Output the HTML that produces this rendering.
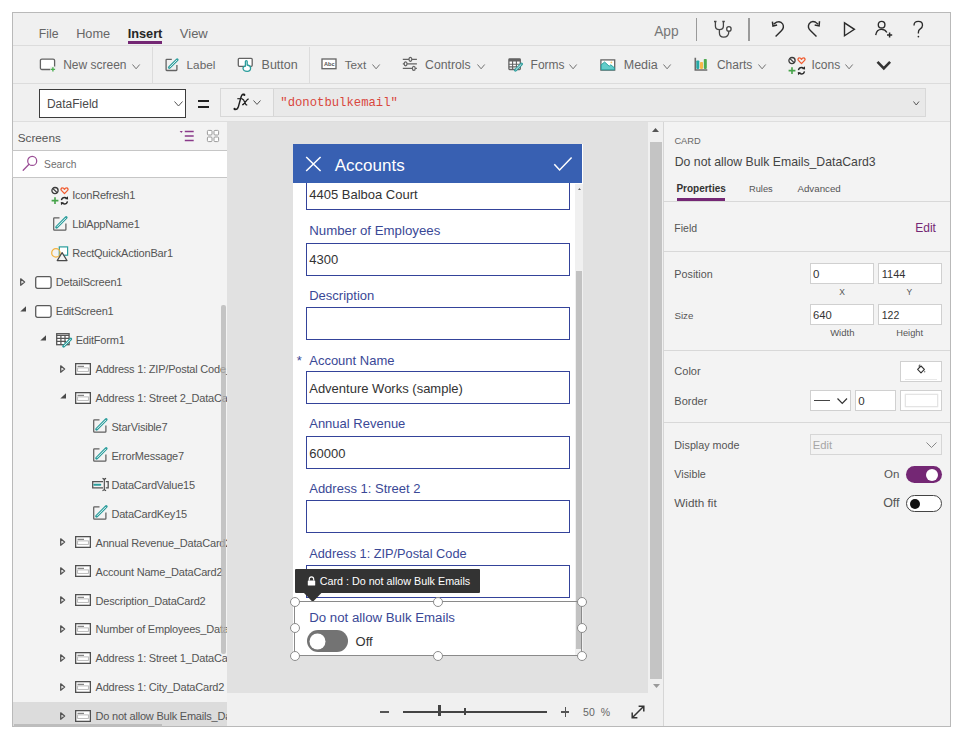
<!DOCTYPE html>
<html><head><meta charset="utf-8">
<style>
*{box-sizing:border-box;margin:0;padding:0}
html,body{-webkit-font-smoothing:antialiased;width:965px;height:739px;background:#fff;overflow:hidden;font-family:'Liberation Sans',sans-serif;color:#444}
.a{position:absolute}
.t{position:absolute;white-space:nowrap;line-height:1}
svg{position:absolute;overflow:visible}
</style></head><body>
<div class="a" style="left:12px;top:12px;width:939px;height:715px;border:1px solid #b9b9b9;background:#f0f0f0"></div>
<div class="a" style="left:13px;top:45px;width:937px;height:1px;background:#dcdcdc"></div>
<div class="a" style="left:13px;top:83px;width:937px;height:1px;background:#dcdcdc"></div>
<div class="a" style="left:13px;top:121px;width:937px;height:1px;background:#dedede"></div>
<span class="t" style="left:38.77px;top:28.00px;font-size:12.25px;color:#666666;">File</span>
<span class="t" style="left:76.14px;top:28.00px;font-size:12.75px;color:#666666;">Home</span>
<span class="t" style="left:127.64px;top:28.00px;font-size:12.75px;color:#262626;font-weight:700;">Insert</span>
<div class="a" style="left:128px;top:41px;width:34px;height:3px;background:#742774"></div>
<span class="t" style="left:179.82px;top:27.00px;font-size:13.00px;color:#666666;">View</span>
<span class="t" style="left:654.17px;top:25.00px;font-size:13.75px;color:#777777;">App</span>
<svg style="left:713px;top:20px;" width="20" height="19" viewBox="0 0 20 19"><path d="M2.4 1.5 V6 Q2.4 9.7 6.4 9.7 Q10.4 9.7 10.4 6 V1.5 M1 1.5 H3.5 M9.3 1.5 H11.8 M6.4 9.7 V12.7 Q6.4 17.1 10.6 17.1 Q15.8 17.1 15.8 11.7 V11.1" fill="none" stroke="#444" stroke-width="1.3"/><circle cx="15.9" cy="8.9" r="2.2" fill="#fff" stroke="#444" stroke-width="1.3"/></svg>
<div class="a" style="left:748.3px;top:17.5px;width:1.5px;height:23px;background:#9a9a9a"></div>
<div class="a" style="left:696px;top:17.5px;width:1.3px;height:23px;background:#9a9a9a"></div>
<svg style="left:771px;top:20px;" width="16" height="19" viewBox="0 0 16 19"><path d="M4.6 16.6 L10.4 10.8 Q13.6 7.6 11.7 4 Q9.6 0.6 5.6 2.2 L2.6 4.2" fill="none" stroke="#2b2b2b" stroke-width="1.4"/><path d="M1.4 1.6 L2 6 L6.1 5.1" fill="none" stroke="#2b2b2b" stroke-width="1.5"/></svg>
<svg style="left:805px;top:20px;" width="17" height="19" viewBox="0 0 17 19"><path d="M11.5 16.6 L5.4 10.6 Q2.2 7.4 4.1 3.8 Q6.3 0.4 10.3 2 L13.2 4.2" fill="none" stroke="#2b2b2b" stroke-width="1.4"/><path d="M14.5 1.2 L14.1 5.9 L9.7 5" fill="none" stroke="#2b2b2b" stroke-width="1.5"/></svg>
<svg style="left:843px;top:22px;" width="13" height="15" viewBox="0 0 13 15"><path d="M1.5 0.9 V13.8 L11.4 7.35 Z" fill="none" stroke="#2b2b2b" stroke-width="1.4" stroke-linejoin="miter"/></svg>
<svg style="left:874px;top:20px;" width="20" height="19" viewBox="0 0 20 19"><circle cx="7.6" cy="4.7" r="3.3" fill="none" stroke="#2b2b2b" stroke-width="1.4"/><path d="M1.7 15.2 Q2.5 9.4 7.6 9.4 Q11.2 9.4 12.9 12.5" fill="none" stroke="#2b2b2b" stroke-width="1.4"/><path d="M15.6 12.5 V17.6 M13 15.1 H18.2" stroke="#2b2b2b" stroke-width="1.5"/></svg>
<svg style="left:912px;top:20px;" width="13" height="19" viewBox="0 0 13 19"><path d="M2 5.4 Q2 1.4 6.3 1.4 Q10.5 1.4 10.5 5.2 Q10.5 7.6 8 9.1 Q6.4 10.1 6.4 12.3 V13.6" fill="none" stroke="#2b2b2b" stroke-width="1.35"/><circle cx="6.4" cy="16.6" r="0.85" fill="#2b2b2b"/></svg>
<span class="t" style="left:63.18px;top:59.00px;font-size:12.00px;color:#666666;">New screen</span>
<span class="t" style="left:186.59px;top:59.00px;font-size:11.75px;color:#666666;">Label</span>
<span class="t" style="left:261.55px;top:59.00px;font-size:12.50px;color:#666666;">Button</span>
<span class="t" style="left:344.69px;top:59.00px;font-size:11.75px;color:#666666;">Text</span>
<span class="t" style="left:425.06px;top:59.00px;font-size:12.25px;color:#666666;">Controls</span>
<span class="t" style="left:530.58px;top:59.00px;font-size:12.00px;color:#666666;">Forms</span>
<span class="t" style="left:623.75px;top:59.00px;font-size:12.50px;color:#666666;">Media</span>
<span class="t" style="left:716.88px;top:59.00px;font-size:12.00px;color:#666666;">Charts</span>
<span class="t" style="left:811.48px;top:59.00px;font-size:12.00px;color:#666666;">Icons</span>
<div class="a" style="left:152px;top:47px;width:1px;height:36px;background:#dcdcdc"></div>
<div class="a" style="left:309px;top:47px;width:1px;height:36px;background:#dcdcdc"></div>
<svg style="left:39px;top:58px;" width="18" height="14" viewBox="0 0 18 14"><rect x="1.4" y="1.1" width="14.2" height="10.4" rx="1.5" fill="#fff" stroke="#636363" stroke-width="1.3"/><rect x="11.2" y="8.5" width="5.6" height="5.5" fill="#f0f0f0"/><path d="M13.9 9.2 V13.6 M11.7 11.4 H16.1" stroke="#4caf50" stroke-width="1.4"/></svg>
<svg style="left:164.5px;top:57.5px;" width="14" height="14" viewBox="0 0 14 14"><path d="M6.8 1.3 H1.8 Q1.1 1.3 1.1 2 V11.8 Q1.1 12.5 1.8 12.5 H11.2 Q11.9 12.5 11.9 11.8 V7" fill="none" stroke="#636363" stroke-width="1.3"/><path d="M4.3 9.6 L12.2 1.7" stroke="#2a9d9c" stroke-width="2.8" stroke-linecap="round"/><path d="M4.8 9.1 L11.7 2.2" stroke="#fff" stroke-width="0.9" stroke-linecap="round"/></svg>
<svg style="left:237px;top:57px;" width="17" height="16" viewBox="0 0 17 16"><rect x="1.3" y="1.3" width="13.9" height="8.0" rx="1" fill="#fff" stroke="#636363" stroke-width="1.3"/><path d="M8.4 9.2 V4.6 Q8.4 3.7 9.3 3.7 Q10.2 3.7 10.2 4.6 V8 Q13.6 8.6 13.6 11 Q13.6 14.3 10.2 14.3 Q6.3 14.3 6.0 11.2 Q6 9.6 8.4 9.2Z" fill="#fff" stroke="#2a9d9c" stroke-width="1.3" stroke-linejoin="round"/></svg>
<svg style="left:321px;top:58px;" width="16" height="12" viewBox="0 0 16 12"><rect x="1" y="1" width="14" height="9.7" fill="#fff" stroke="#636363" stroke-width="1.3"/><text x="3" y="8.2" font-family="Liberation Sans" font-size="5.6" font-weight="700" fill="#555">Abc</text></svg>
<svg style="left:402px;top:57px;" width="16" height="14" viewBox="0 0 16 14"><path d="M0.8 2.3 H14.9 M0.8 6.8 H14.9 M0.8 11.4 H14.9" stroke="#636363" stroke-width="1.3"/><ellipse cx="8.4" cy="2.3" rx="1.4" ry="2" fill="#f0f0f0" stroke="#636363" stroke-width="1.2"/><ellipse cx="3.6" cy="6.8" rx="1.4" ry="2" fill="#f0f0f0" stroke="#636363" stroke-width="1.2"/><ellipse cx="11.8" cy="11.4" rx="1.4" ry="2" fill="#f0f0f0" stroke="#636363" stroke-width="1.2"/></svg>
<svg style="left:507.5px;top:58px;" width="16" height="14" viewBox="0 0 16 14"><rect x="0.9" y="0.9" width="11.4" height="10.6" rx="0.8" fill="#fff" stroke="#636363" stroke-width="1.3"/><rect x="0.9" y="0.9" width="11.4" height="2.6" fill="#636363"/><path d="M0.9 6.2 H12.3 M0.9 8.9 H9 M4.6 3 V11.5 M8.4 3 V9.5" stroke="#636363" stroke-width="1.1"/><path d="M7.4 12.2 L13.6 6" stroke="#2a9d9c" stroke-width="2.8" stroke-linecap="round"/><path d="M7.9 11.7 L13.1 6.5" stroke="#fff" stroke-width="0.9" stroke-linecap="round"/></svg>
<svg style="left:600px;top:58.5px;" width="16" height="12" viewBox="0 0 16 12"><rect x="0.9" y="0.9" width="13.8" height="10.2" fill="#fff" stroke="#636363" stroke-width="1.3"/><path d="M1.2 5.8 L4.6 3 L9.2 7.2 L10.8 5.8 L14.4 8.8 V10.8 H1.2Z" fill="#62cdcb" stroke="#1f9d9b" stroke-width="0.9" stroke-linejoin="round"/><circle cx="11.4" cy="3.4" r="0.9" fill="#f7c46c"/></svg>
<svg style="left:694px;top:57px;" width="15" height="15" viewBox="0 0 15 15"><rect x="2.3" y="3.5" width="3" height="8.4" rx="0.8" fill="#24a9a6"/><rect x="6" y="5" width="3" height="6.9" rx="0.8" fill="#f7b84b"/><rect x="9.8" y="2" width="3" height="9.9" rx="0.8" fill="#4caa50"/><path d="M1.3 0.8 V13 H13.3" fill="none" stroke="#6a6a6a" stroke-width="1.6"/></svg>
<svg style="left:787.5px;top:56.5px;" width="18" height="17" viewBox="0 0 18 17"><circle cx="4" cy="3.6" r="3.1" fill="none" stroke="#3a3a3a" stroke-width="1.3"/><path d="M1.9 1.6 L6.1 5.6" stroke="#3a3a3a" stroke-width="1.3"/><path d="M13.5 6.6 L10.4 3.4 C9.4 2.3 10.2 0.7 11.6 0.9 C12.6 1 13.2 1.8 13.5 2.3 C13.8 1.8 14.4 1 15.4 0.9 C16.8 0.7 17.6 2.3 16.6 3.4 Z" fill="none" stroke="#f05a2e" stroke-width="1.3" stroke-linejoin="round"/><path d="M4 10.2 V17 M0.6 13.6 H7.4" stroke="#45a349" stroke-width="1.6"/><path d="M10.4 13.2 Q11.1 10.5 13.5 10.5 Q14.9 10.5 15.7 11.6" fill="none" stroke="#2a2a2a" stroke-width="1.35"/><path d="M13.9 12.1 L17.1 12.5 L16.9 9.3Z" fill="#2a2a2a"/><path d="M16.5 14.3 Q15.8 17 13.4 17 Q12 17 11.2 15.9" fill="none" stroke="#2a2a2a" stroke-width="1.35"/><path d="M13 15.4 L9.8 15 L10 18.2Z" fill="#2a2a2a"/></svg>
<svg style="left:876px;top:59.5px;" width="16" height="11" viewBox="0 0 16 11"><path d="M1.5 1.8 L7.8 8.3 L14.1 1.8" fill="none" stroke="#333" stroke-width="2.6"/></svg>
<svg style="left:132px;top:63.5px;" width="8.2" height="4.8" viewBox="0 0 8.2 4.8"><path d="M0.5 0.5 L4.1 4.8 L7.699999999999999 0.5" fill="none" stroke="#6a6a6a" stroke-width="0.95"/></svg>
<svg style="left:372px;top:63.5px;" width="8.2" height="4.8" viewBox="0 0 8.2 4.8"><path d="M0.5 0.5 L4.1 4.8 L7.699999999999999 0.5" fill="none" stroke="#6a6a6a" stroke-width="0.95"/></svg>
<svg style="left:476.5px;top:63.5px;" width="8.2" height="4.8" viewBox="0 0 8.2 4.8"><path d="M0.5 0.5 L4.1 4.8 L7.699999999999999 0.5" fill="none" stroke="#6a6a6a" stroke-width="0.95"/></svg>
<svg style="left:569px;top:63.5px;" width="8.2" height="4.8" viewBox="0 0 8.2 4.8"><path d="M0.5 0.5 L4.1 4.8 L7.699999999999999 0.5" fill="none" stroke="#6a6a6a" stroke-width="0.95"/></svg>
<svg style="left:663px;top:63.5px;" width="8.2" height="4.8" viewBox="0 0 8.2 4.8"><path d="M0.5 0.5 L4.1 4.8 L7.699999999999999 0.5" fill="none" stroke="#6a6a6a" stroke-width="0.95"/></svg>
<svg style="left:757.5px;top:63.5px;" width="8.2" height="4.8" viewBox="0 0 8.2 4.8"><path d="M0.5 0.5 L4.1 4.8 L7.699999999999999 0.5" fill="none" stroke="#6a6a6a" stroke-width="0.95"/></svg>
<svg style="left:845px;top:63.5px;" width="8.2" height="4.8" viewBox="0 0 8.2 4.8"><path d="M0.5 0.5 L4.1 4.8 L7.699999999999999 0.5" fill="none" stroke="#6a6a6a" stroke-width="0.95"/></svg>
<div class="a" style="left:39px;top:89px;width:147px;height:29px;border:1px solid #3c3c3c;background:#fff"></div>
<span class="t" style="left:46.88px;top:98.00px;font-size:12.00px;color:#4a4a4a;">DataField</span>
<svg style="left:173.5px;top:100.5px;" width="9" height="5" viewBox="0 0 9 5"><path d="M0.5 0.5 L4.5 5 L8.5 0.5" fill="none" stroke="#555" stroke-width="1"/></svg>
<div class="a" style="left:198.3px;top:100px;width:10.4px;height:1.7px;background:#222"></div>
<div class="a" style="left:198.3px;top:106px;width:10.4px;height:1.7px;background:#222"></div>
<div class="a" style="left:220px;top:88px;width:706px;height:29px;border:1px solid #d8d8d8;background:#e9e9e9"></div>
<div class="a" style="left:221px;top:89px;width:53px;height:27px;background:#f0f0f0;border-right:1px solid #d6d6d6"></div>
<svg style="left:230px;top:92px;" width="22" height="22" viewBox="0 0 22 22"><path d="M14.6 3.2 Q14.2 2 13 2.3 Q11.5 2.7 10.6 6.6 L8.4 14.6 Q7.5 17.9 4.8 17.6" fill="none" stroke="#1e1e1e" stroke-width="1.45"/><circle cx="14.3" cy="2.9" r="1.05" fill="#1e1e1e"/><circle cx="4.6" cy="17" r="1.15" fill="#1e1e1e"/><path d="M7.3 6.7 H12.6" stroke="#1e1e1e" stroke-width="1.1"/><path d="M12.2 7.6 Q13.3 7 13.9 8.4 L15.7 12.3 Q16.1 13.1 17.2 12.6 M18.7 7.3 Q17.8 7 16.9 8.1 L13.7 12 Q13 12.9 12.1 12.6" fill="none" stroke="#1e1e1e" stroke-width="1.25"/></svg>
<svg style="left:253.3px;top:99.8px;" width="8" height="4.4" viewBox="0 0 8 4.4"><path d="M0.5 0.5 L4.0 4.4 L7.5 0.5" fill="none" stroke="#555" stroke-width="1"/></svg>
<span class="t" style="left:280.29px;top:97.00px;font-size:12.25px;color:#d9473d;font-family:'Liberation Mono',monospace;">&quot;donotbulkemail&quot;</span>
<svg style="left:912.5px;top:100.5px;" width="6.5" height="4" viewBox="0 0 6.5 4"><path d="M0.5 0.5 L3.25 4 L6.0 0.5" fill="none" stroke="#555" stroke-width="1"/></svg>
<div class="a" style="left:13px;top:122px;width:214px;height:604px;background:#f3f3f3"></div>
<span class="t" style="left:17.70px;top:132.00px;font-size:11.75px;color:#555;">Screens</span>
<svg style="left:179px;top:129px;" width="16" height="13" viewBox="0 0 16 13"><path d="M0.7 2 L3.8 2 L2.25 4Z" fill="#8a3a8a"/><path d="M5.8 2.6 H14.7 M5.8 7 H14.7 M5.8 11.4 H14.7" stroke="#8a3a8a" stroke-width="1.5"/></svg>
<svg style="left:206px;top:128.5px;" width="14" height="14" viewBox="0 0 14 14"><rect x="1.4" y="1.4" width="4.6" height="4.6" rx="1" fill="#fff" stroke="#9a9a9a" stroke-width="1"/><rect x="8" y="1.4" width="4.6" height="4.6" rx="1" fill="#fff" stroke="#9a9a9a" stroke-width="1"/><rect x="1.4" y="8" width="4.6" height="4.6" rx="1" fill="#fff" stroke="#9a9a9a" stroke-width="1"/><rect x="8" y="8" width="4.6" height="4.6" rx="1" fill="#fff" stroke="#9a9a9a" stroke-width="1"/></svg>
<div class="a" style="left:12px;top:150px;width:216px;height:28px;background:#fff;border:1px solid #c6c6c6"></div>
<span class="t" style="left:44.09px;top:160.00px;font-size:10.25px;color:#6f6f6f;">Search</span>
<svg style="left:22px;top:155px;" width="17" height="17" viewBox="0 0 17 17"><circle cx="10.2" cy="5.9" r="4.5" fill="none" stroke="#9b4f96" stroke-width="1.25"/><path d="M7 9.2 L1.2 15.2" stroke="#9b4f96" stroke-width="1.3" stroke-linecap="round"/></svg>
<div class="a" style="left:13px;top:702px;width:214px;height:24px;background:#dcdcdc"></div>
<div class="a" style="left:13px;top:180px;width:214px;height:546px;overflow:hidden">
<span class="t" style="left:59.24px;top:10.00px;font-size:11.00px;color:#555555;letter-spacing:-0.21px;">IconRefresh1</span>
<svg style="left:38px;top:7.0px;" width="18" height="17" viewBox="0 0 18 17"><circle cx="4" cy="3.6" r="3.1" fill="none" stroke="#3a3a3a" stroke-width="1.3"/><path d="M1.9 1.6 L6.1 5.6" stroke="#3a3a3a" stroke-width="1.3"/><path d="M13.5 6.6 L10.4 3.4 C9.4 2.3 10.2 0.7 11.6 0.9 C12.6 1 13.2 1.8 13.5 2.3 C13.8 1.8 14.4 1 15.4 0.9 C16.8 0.7 17.6 2.3 16.6 3.4 Z" fill="none" stroke="#f05a2e" stroke-width="1.3" stroke-linejoin="round"/><path d="M4 10.2 V17 M0.6 13.6 H7.4" stroke="#45a349" stroke-width="1.6"/><path d="M10.4 13.2 Q11.1 10.5 13.5 10.5 Q14.9 10.5 15.7 11.6" fill="none" stroke="#2a2a2a" stroke-width="1.35"/><path d="M13.9 12.1 L17.1 12.5 L16.9 9.3Z" fill="#2a2a2a"/><path d="M16.5 14.3 Q15.8 17 13.4 17 Q12 17 11.2 15.9" fill="none" stroke="#2a2a2a" stroke-width="1.35"/><path d="M13 15.4 L9.8 15 L10 18.2Z" fill="#2a2a2a"/></svg>
<span class="t" style="left:59.24px;top:39.00px;font-size:11.00px;color:#555555;letter-spacing:-0.21px;">LblAppName1</span>
<svg style="left:40px;top:36.93000000000001px;transform:scale(1.0);transform-origin:0 0" width="15" height="15" viewBox="0 0 15 15"><path d="M6.5 0.9 H1.4 Q0.7 0.9 0.7 1.6 V12.4 Q0.7 13.1 1.4 13.1 H12.2 Q12.9 13.1 12.9 12.4 V6.5" fill="none" stroke="#606060" stroke-width="1.25"/><path d="M3.6 10.2 L13.2 0.6" stroke="#2a9d9c" stroke-width="2.8" stroke-linecap="round"/><path d="M4.2 9.6 L12.6 1.2" stroke="#fff" stroke-width="0.9" stroke-linecap="round"/></svg>
<span class="t" style="left:59.24px;top:68.00px;font-size:11.00px;color:#555555;letter-spacing:-0.21px;">RectQuickActionBar1</span>
<svg style="left:38px;top:66.36000000000001px;" width="18" height="16" viewBox="0 0 18 16"><rect x="8.3" y="0.9" width="8.3" height="8.3" fill="#fff" stroke="#2a9d9c" stroke-width="1.2"/><circle cx="4.9" cy="6.9" r="4.2" fill="none" stroke="#f2b23e" stroke-width="1.2"/><path d="M11.1 6.6 L16 14.6 H6.2 Z" fill="#f3f3f3" stroke="#4a4a4a" stroke-width="1.2" stroke-linejoin="round"/></svg>
<span class="t" style="left:42.84px;top:97.00px;font-size:11.00px;color:#555555;letter-spacing:-0.21px;">DetailScreen1</span>
<svg style="left:6.899999999999999px;top:97.78999999999996px;" width="6" height="8" viewBox="0 0 6 8"><path d="M0.7 0.8 L4.6 4 L0.7 7.2 Z" fill="none" stroke="#555" stroke-width="1.3" stroke-linejoin="round"/></svg>
<svg style="left:22.4px;top:95.78999999999996px;" width="17" height="13" viewBox="0 0 17 13"><rect x="0.7" y="0.7" width="15.4" height="11.6" rx="1.8" fill="#fff" stroke="#5a5a5a" stroke-width="1.3"/></svg>
<span class="t" style="left:42.84px;top:126.00px;font-size:11.00px;color:#555555;letter-spacing:-0.21px;">EditScreen1</span>
<svg style="left:6.899999999999999px;top:126.22000000000003px;" width="7" height="6" viewBox="0 0 7 6"><path d="M0.3 5.6 L6 5.6 L6 0.2 Z" fill="#4a4a4a"/></svg>
<svg style="left:22.4px;top:124.72000000000003px;" width="17" height="13" viewBox="0 0 17 13"><rect x="0.7" y="0.7" width="15.4" height="11.6" rx="1.8" fill="#fff" stroke="#5a5a5a" stroke-width="1.3"/></svg>
<span class="t" style="left:62.74px;top:155.00px;font-size:11.00px;color:#555555;letter-spacing:-0.21px;">EditForm1</span>
<svg style="left:27.299999999999997px;top:155.14999999999998px;" width="7" height="6" viewBox="0 0 7 6"><path d="M0.3 5.6 L6 5.6 L6 0.2 Z" fill="#4a4a4a"/></svg>
<svg style="left:42.8px;top:153.14999999999998px;" width="16" height="15" viewBox="0 0 16 15"><rect x="0.7" y="0.7" width="12.4" height="11" fill="#fff" stroke="#555" stroke-width="1.3"/><path d="M0.7 2.3 H13 M0.7 5.3 H13 M0.7 8.4 H10 M4.9 2.3 V11.7 M9 2.3 V10" stroke="#555" stroke-width="1.2"/><path d="M7.6 13.3 L14.8 6.1" stroke="#2a9d9c" stroke-width="2.8" stroke-linecap="round"/><path d="M8.2 12.7 L14.2 6.7" stroke="#fff" stroke-width="0.9" stroke-linecap="round"/></svg>
<span class="t" style="left:82.54px;top:184.00px;font-size:11.00px;color:#555555;letter-spacing:-0.21px;">Address 1: ZIP/Postal Code_DataCard2</span>
<svg style="left:46.5px;top:184.57999999999998px;" width="6" height="8" viewBox="0 0 6 8"><path d="M0.7 0.8 L4.6 4 L0.7 7.2 Z" fill="none" stroke="#555" stroke-width="1.3" stroke-linejoin="round"/></svg>
<svg style="left:62px;top:182.57999999999998px;" width="16" height="12" viewBox="0 0 16 12"><rect x="0.65" y="0.65" width="14.7" height="10.7" fill="#fff" stroke="#505050" stroke-width="1.3"/><path d="M2.5 3.3 H9" stroke="#6a6a6a" stroke-width="1"/><rect x="2.6" y="4.9" width="10.8" height="3.5" fill="none" stroke="#b4b4b4" stroke-width="0.9"/></svg>
<span class="t" style="left:82.54px;top:213.00px;font-size:11.00px;color:#555555;letter-spacing:-0.21px;">Address 1: Street 2_DataCard2</span>
<svg style="left:46.5px;top:213.01px;" width="7" height="6" viewBox="0 0 7 6"><path d="M0.3 5.6 L6 5.6 L6 0.2 Z" fill="#4a4a4a"/></svg>
<svg style="left:62px;top:211.51px;" width="16" height="12" viewBox="0 0 16 12"><rect x="0.65" y="0.65" width="14.7" height="10.7" fill="#fff" stroke="#505050" stroke-width="1.3"/><path d="M2.5 3.3 H9" stroke="#6a6a6a" stroke-width="1"/><rect x="2.6" y="4.9" width="10.8" height="3.5" fill="none" stroke="#b4b4b4" stroke-width="0.9"/></svg>
<span class="t" style="left:98.44px;top:242.00px;font-size:11.00px;color:#555555;letter-spacing:-0.21px;">StarVisible7</span>
<svg style="left:80.2px;top:239.44px;transform:scale(1.0);transform-origin:0 0" width="15" height="15" viewBox="0 0 15 15"><path d="M6.5 0.9 H1.4 Q0.7 0.9 0.7 1.6 V12.4 Q0.7 13.1 1.4 13.1 H12.2 Q12.9 13.1 12.9 12.4 V6.5" fill="none" stroke="#606060" stroke-width="1.25"/><path d="M3.6 10.2 L13.2 0.6" stroke="#2a9d9c" stroke-width="2.8" stroke-linecap="round"/><path d="M4.2 9.6 L12.6 1.2" stroke="#fff" stroke-width="0.9" stroke-linecap="round"/></svg>
<span class="t" style="left:98.44px;top:271.00px;font-size:11.00px;color:#555555;letter-spacing:-0.21px;">ErrorMessage7</span>
<svg style="left:80.2px;top:268.37px;transform:scale(1.0);transform-origin:0 0" width="15" height="15" viewBox="0 0 15 15"><path d="M6.5 0.9 H1.4 Q0.7 0.9 0.7 1.6 V12.4 Q0.7 13.1 1.4 13.1 H12.2 Q12.9 13.1 12.9 12.4 V6.5" fill="none" stroke="#606060" stroke-width="1.25"/><path d="M3.6 10.2 L13.2 0.6" stroke="#2a9d9c" stroke-width="2.8" stroke-linecap="round"/><path d="M4.2 9.6 L12.6 1.2" stroke="#fff" stroke-width="0.9" stroke-linecap="round"/></svg>
<span class="t" style="left:98.44px;top:300.00px;font-size:11.00px;color:#555555;letter-spacing:-0.21px;">DataCardValue15</span>
<svg style="left:79px;top:297.8px;" width="17" height="13" viewBox="0 0 17 13"><path d="M11 3.6 H0.7 V9.8 H11 M13.8 3.6 H16.2 V9.8 H13.8" fill="none" stroke="#555" stroke-width="1.3"/><path d="M2.3 6.7 H8.3" stroke="#2a9d9c" stroke-width="2" stroke-linecap="round"/><path d="M12.3 0.6 V12.4 M10.5 0.4 Q12.3 0.8 12.3 2 Q12.3 0.8 14.1 0.4 M10.5 12.6 Q12.3 12.2 12.3 11 Q12.3 12.2 14.1 12.6" fill="none" stroke="#444" stroke-width="1.1"/></svg>
<span class="t" style="left:98.44px;top:329.00px;font-size:11.00px;color:#555555;letter-spacing:-0.21px;">DataCardKey15</span>
<svg style="left:80.2px;top:326.23px;transform:scale(1.0);transform-origin:0 0" width="15" height="15" viewBox="0 0 15 15"><path d="M6.5 0.9 H1.4 Q0.7 0.9 0.7 1.6 V12.4 Q0.7 13.1 1.4 13.1 H12.2 Q12.9 13.1 12.9 12.4 V6.5" fill="none" stroke="#606060" stroke-width="1.25"/><path d="M3.6 10.2 L13.2 0.6" stroke="#2a9d9c" stroke-width="2.8" stroke-linecap="round"/><path d="M4.2 9.6 L12.6 1.2" stroke="#fff" stroke-width="0.9" stroke-linecap="round"/></svg>
<span class="t" style="left:82.54px;top:358.00px;font-size:11.00px;color:#555555;letter-spacing:-0.21px;">Annual Revenue_DataCard2</span>
<svg style="left:46.5px;top:358.15999999999997px;" width="6" height="8" viewBox="0 0 6 8"><path d="M0.7 0.8 L4.6 4 L0.7 7.2 Z" fill="none" stroke="#555" stroke-width="1.3" stroke-linejoin="round"/></svg>
<svg style="left:62px;top:356.15999999999997px;" width="16" height="12" viewBox="0 0 16 12"><rect x="0.65" y="0.65" width="14.7" height="10.7" fill="#fff" stroke="#505050" stroke-width="1.3"/><path d="M2.5 3.3 H9" stroke="#6a6a6a" stroke-width="1"/><rect x="2.6" y="4.9" width="10.8" height="3.5" fill="none" stroke="#b4b4b4" stroke-width="0.9"/></svg>
<span class="t" style="left:82.54px;top:387.00px;font-size:11.00px;color:#555555;letter-spacing:-0.21px;">Account Name_DataCard2</span>
<svg style="left:46.5px;top:387.0899999999999px;" width="6" height="8" viewBox="0 0 6 8"><path d="M0.7 0.8 L4.6 4 L0.7 7.2 Z" fill="none" stroke="#555" stroke-width="1.3" stroke-linejoin="round"/></svg>
<svg style="left:62px;top:385.0899999999999px;" width="16" height="12" viewBox="0 0 16 12"><rect x="0.65" y="0.65" width="14.7" height="10.7" fill="#fff" stroke="#505050" stroke-width="1.3"/><path d="M2.5 3.3 H9" stroke="#6a6a6a" stroke-width="1"/><rect x="2.6" y="4.9" width="10.8" height="3.5" fill="none" stroke="#b4b4b4" stroke-width="0.9"/></svg>
<span class="t" style="left:82.54px;top:416.00px;font-size:11.00px;color:#555555;letter-spacing:-0.21px;">Description_DataCard2</span>
<svg style="left:46.5px;top:416.02px;" width="6" height="8" viewBox="0 0 6 8"><path d="M0.7 0.8 L4.6 4 L0.7 7.2 Z" fill="none" stroke="#555" stroke-width="1.3" stroke-linejoin="round"/></svg>
<svg style="left:62px;top:414.02px;" width="16" height="12" viewBox="0 0 16 12"><rect x="0.65" y="0.65" width="14.7" height="10.7" fill="#fff" stroke="#505050" stroke-width="1.3"/><path d="M2.5 3.3 H9" stroke="#6a6a6a" stroke-width="1"/><rect x="2.6" y="4.9" width="10.8" height="3.5" fill="none" stroke="#b4b4b4" stroke-width="0.9"/></svg>
<span class="t" style="left:82.54px;top:444.00px;font-size:11.00px;color:#555555;letter-spacing:-0.21px;">Number of Employees_DataCard2</span>
<svg style="left:46.5px;top:444.95000000000005px;" width="6" height="8" viewBox="0 0 6 8"><path d="M0.7 0.8 L4.6 4 L0.7 7.2 Z" fill="none" stroke="#555" stroke-width="1.3" stroke-linejoin="round"/></svg>
<svg style="left:62px;top:442.95000000000005px;" width="16" height="12" viewBox="0 0 16 12"><rect x="0.65" y="0.65" width="14.7" height="10.7" fill="#fff" stroke="#505050" stroke-width="1.3"/><path d="M2.5 3.3 H9" stroke="#6a6a6a" stroke-width="1"/><rect x="2.6" y="4.9" width="10.8" height="3.5" fill="none" stroke="#b4b4b4" stroke-width="0.9"/></svg>
<span class="t" style="left:82.54px;top:473.00px;font-size:11.00px;color:#555555;letter-spacing:-0.21px;">Address 1: Street 1_DataCard2</span>
<svg style="left:46.5px;top:473.88px;" width="6" height="8" viewBox="0 0 6 8"><path d="M0.7 0.8 L4.6 4 L0.7 7.2 Z" fill="none" stroke="#555" stroke-width="1.3" stroke-linejoin="round"/></svg>
<svg style="left:62px;top:471.88px;" width="16" height="12" viewBox="0 0 16 12"><rect x="0.65" y="0.65" width="14.7" height="10.7" fill="#fff" stroke="#505050" stroke-width="1.3"/><path d="M2.5 3.3 H9" stroke="#6a6a6a" stroke-width="1"/><rect x="2.6" y="4.9" width="10.8" height="3.5" fill="none" stroke="#b4b4b4" stroke-width="0.9"/></svg>
<span class="t" style="left:82.54px;top:502.00px;font-size:11.00px;color:#555555;letter-spacing:-0.21px;">Address 1: City_DataCard2</span>
<svg style="left:46.5px;top:502.80999999999995px;" width="6" height="8" viewBox="0 0 6 8"><path d="M0.7 0.8 L4.6 4 L0.7 7.2 Z" fill="none" stroke="#555" stroke-width="1.3" stroke-linejoin="round"/></svg>
<svg style="left:62px;top:500.80999999999995px;" width="16" height="12" viewBox="0 0 16 12"><rect x="0.65" y="0.65" width="14.7" height="10.7" fill="#fff" stroke="#505050" stroke-width="1.3"/><path d="M2.5 3.3 H9" stroke="#6a6a6a" stroke-width="1"/><rect x="2.6" y="4.9" width="10.8" height="3.5" fill="none" stroke="#b4b4b4" stroke-width="0.9"/></svg>
<span class="t" style="left:82.54px;top:531.00px;font-size:11.00px;color:#555555;letter-spacing:-0.21px;">Do not allow Bulk Emails_DataCard2</span>
<svg style="left:46.5px;top:531.74px;" width="6" height="8" viewBox="0 0 6 8"><path d="M0.7 0.8 L4.6 4 L0.7 7.2 Z" fill="none" stroke="#555" stroke-width="1.3" stroke-linejoin="round"/></svg>
<svg style="left:62px;top:529.74px;" width="16" height="12" viewBox="0 0 16 12"><rect x="0.65" y="0.65" width="14.7" height="10.7" fill="#fff" stroke="#505050" stroke-width="1.3"/><path d="M2.5 3.3 H9" stroke="#6a6a6a" stroke-width="1"/><rect x="2.6" y="4.9" width="10.8" height="3.5" fill="none" stroke="#b4b4b4" stroke-width="0.9"/></svg>
</div>
<div class="a" style="left:221px;top:305px;width:5px;height:349px;background:rgba(180,180,180,0.75);border-radius:2px"></div>
<div class="a" style="left:14px;top:724px;width:148px;height:3px;background:#bdbdbd"></div>
<div class="a" style="left:227px;top:122px;width:421px;height:571px;background:#e1e1e1"></div>
<div class="a" style="left:648px;top:122px;width:15px;height:571px;background:#f0f0f0"></div>
<div class="a" style="left:650px;top:142px;width:12px;height:537px;background:#c4c4c4"></div>
<svg style="left:652px;top:128px;" width="7" height="4" viewBox="0 0 7 4"><path d="M0 4 L3.5 0 L7 4Z" fill="#555"/></svg>
<svg style="left:652.5px;top:684px;" width="7" height="4" viewBox="0 0 7 4"><path d="M0 0 L3.5 4 L7 0Z" fill="#9a9a9a"/></svg>
<div class="a" style="left:663px;top:122px;width:1px;height:604px;background:#d6d6d6"></div>
<div class="a" style="left:227px;top:693px;width:436px;height:33px;background:#f0f0f0"></div>
<div class="a" style="left:293px;top:144px;width:290px;height:511px;background:#fff"></div>
<div class="a" style="left:293px;top:144px;width:289px;height:39px;background:#3860b2"></div>
<span class="t" style="left:334.78px;top:157.00px;font-size:17.00px;color:#fff;">Accounts</span>
<div class="a" style="left:575px;top:184px;width:8px;height:471px;background:#f0f0f0"></div>
<div class="a" style="left:575.5px;top:271px;width:6.5px;height:378px;background:#c2c2c2"></div>
<div class="a" style="left:306px;top:183.0px;width:264px;height:27.0px;border:1.3px solid #34439a;border-top:none;"></div>
<div class="a" style="left:306px;top:242.5px;width:264px;height:33.0px;border:1.3px solid #34439a;"></div>
<div class="a" style="left:306px;top:307.1px;width:264px;height:33.0px;border:1.3px solid #34439a;"></div>
<div class="a" style="left:306px;top:371.3px;width:264px;height:33.0px;border:1.3px solid #34439a;"></div>
<div class="a" style="left:306px;top:436.1px;width:264px;height:33.0px;border:1.3px solid #34439a;"></div>
<div class="a" style="left:306px;top:500.3px;width:264px;height:33.0px;border:1.3px solid #34439a;"></div>
<div class="a" style="left:306px;top:565.0px;width:264px;height:33.0px;border:1.3px solid #34439a;"></div>
<span class="t" style="left:309.22px;top:188.00px;font-size:13.00px;color:#333;">4405 Balboa Court</span>
<span class="t" style="left:309.22px;top:253.00px;font-size:13.00px;color:#333;">4300</span>
<span class="t" style="left:309.22px;top:382.00px;font-size:13.00px;color:#333;">Adventure Works (sample)</span>
<span class="t" style="left:309.22px;top:447.00px;font-size:13.00px;color:#333;">60000</span>
<span class="t" style="left:309.20px;top:224.00px;font-size:13.25px;color:#3a4896;">Number of Employees</span>
<span class="t" style="left:309.22px;top:289.00px;font-size:13.00px;color:#3a4896;">Description</span>
<span class="t" style="left:309.22px;top:354.00px;font-size:13.00px;color:#3a4896;">Account Name</span>
<span class="t" style="left:309.22px;top:417.00px;font-size:13.00px;color:#3a4896;">Annual Revenue</span>
<span class="t" style="left:309.22px;top:482.00px;font-size:13.00px;color:#3a4896;">Address 1: Street 2</span>
<span class="t" style="left:309.24px;top:548.00px;font-size:12.75px;color:#3a4896;">Address 1: ZIP/Postal Code</span>
<span class="t" style="left:309.20px;top:611.00px;font-size:13.25px;color:#3a4896;">Do not allow Bulk Emails</span>
<span class="t" style="left:296.72px;top:354.00px;font-size:13.00px;color:#3a4896;">*</span>
<div class="a" style="left:293px;top:144px;width:289px;height:39px;background:#3860b2"></div>
<span class="t" style="left:334.78px;top:157.00px;font-size:17.00px;color:#fff;">Accounts</span>
<svg style="left:305px;top:156px;" width="17" height="16" viewBox="0 0 17 16"><path d="M1.2 1 L15.6 15 M15.6 1 L1.2 15" stroke="#fff" stroke-width="1.5"/></svg>
<svg style="left:553px;top:156px;" width="20" height="16" viewBox="0 0 20 16"><path d="M1.3 8.2 L6.6 14 L18.6 1.4" fill="none" stroke="#fff" stroke-width="1.5"/></svg>
<svg style="left:577.5px;top:187.5px;" width="3" height="2" viewBox="0 0 3 2"><path d="M0 2 L1.5 0 L3 2Z" fill="#666"/></svg>
<div class="a" style="left:294.5px;top:568.5px;width:185px;height:24px;background:#333;border-radius:1px"></div>
<svg style="left:304px;top:592.5px;" width="18" height="9.5" viewBox="0 0 18 9.5"><path d="M0 0 L8.7 9 L17.4 0Z" fill="#333"/></svg>
<span class="t" style="left:319.66px;top:576.00px;font-size:10.75px;color:#fff;">Card : Do not allow Bulk Emails</span>
<svg style="left:306.5px;top:576px;" width="9" height="10" viewBox="0 0 9 10"><path d="M2.3 4.6 V3.2 Q2.3 0.9 4.5 0.9 Q6.7 0.9 6.7 3.2 V4.6" fill="none" stroke="#fff" stroke-width="1.2"/><rect x="0.8" y="4.4" width="7.4" height="5.2" rx="0.6" fill="#fff"/></svg>
<div class="a" style="left:294px;top:601px;width:288px;height:55px;border:1px solid #8a8a8a"></div>
<svg style="left:289.5px;top:596.5px;" width="10" height="10" viewBox="0 0 10 10"><circle cx="5" cy="5" r="4.5" fill="#fff" stroke="#8c8c8c" stroke-width="1"/></svg>
<svg style="left:289.5px;top:623.4px;" width="10" height="10" viewBox="0 0 10 10"><circle cx="5" cy="5" r="4.5" fill="#fff" stroke="#8c8c8c" stroke-width="1"/></svg>
<svg style="left:289.5px;top:650.5px;" width="10" height="10" viewBox="0 0 10 10"><circle cx="5" cy="5" r="4.5" fill="#fff" stroke="#8c8c8c" stroke-width="1"/></svg>
<svg style="left:432.6px;top:596.5px;" width="10" height="10" viewBox="0 0 10 10"><circle cx="5" cy="5" r="4.5" fill="#fff" stroke="#8c8c8c" stroke-width="1"/></svg>
<svg style="left:432.6px;top:650.5px;" width="10" height="10" viewBox="0 0 10 10"><circle cx="5" cy="5" r="4.5" fill="#fff" stroke="#8c8c8c" stroke-width="1"/></svg>
<svg style="left:576.5px;top:596.5px;" width="10" height="10" viewBox="0 0 10 10"><circle cx="5" cy="5" r="4.5" fill="#fff" stroke="#8c8c8c" stroke-width="1"/></svg>
<svg style="left:576.5px;top:623.4px;" width="10" height="10" viewBox="0 0 10 10"><circle cx="5" cy="5" r="4.5" fill="#fff" stroke="#8c8c8c" stroke-width="1"/></svg>
<svg style="left:576.5px;top:650.5px;" width="10" height="10" viewBox="0 0 10 10"><circle cx="5" cy="5" r="4.5" fill="#fff" stroke="#8c8c8c" stroke-width="1"/></svg>
<div class="a" style="left:306.8px;top:630.2px;width:41px;height:21.5px;background:#737373;border-radius:11px"></div>
<svg style="left:309px;top:632.5px;" width="17" height="17" viewBox="0 0 17 17"><circle cx="8.5" cy="8.5" r="8" fill="#fff"/></svg>
<span class="t" style="left:355.52px;top:635.00px;font-size:13.00px;color:#333;">Off</span>
<div class="a" style="left:380px;top:711px;width:9px;height:1.5px;background:#555"></div>
<div class="a" style="left:402.6px;top:711px;width:144.5px;height:2px;background:#444"></div>
<div class="a" style="left:437.8px;top:705px;width:3.3px;height:11px;background:#444"></div>
<div class="a" style="left:464px;top:708px;width:1.6px;height:7px;background:#444"></div>
<div class="a" style="left:560.8px;top:711.4px;width:8.7px;height:1.2px;background:#555"></div>
<div class="a" style="left:564.5px;top:707.4px;width:1.2px;height:9.4px;background:#555"></div>
<span class="t" style="left:583.07px;top:707.00px;font-size:10.50px;color:#666;">50</span>
<span class="t" style="left:600.77px;top:707.00px;font-size:10.50px;color:#666;">%</span>
<svg style="left:630px;top:704px;" width="16" height="16" viewBox="0 0 16 16"><path d="M2 14 L14 2 M8.6 2.2 H13.8 V7.4 M2.2 8.6 V13.8 H7.4" fill="none" stroke="#333" stroke-width="1.5"/></svg>
<div class="a" style="left:664px;top:122px;width:286px;height:604px;background:#f3f3f3"></div>
<span class="t" style="left:674.45px;top:137.00px;font-size:9.25px;color:#666;">CARD</span>
<span class="t" style="left:674.76px;top:156.00px;font-size:12.25px;color:#444;">Do not allow Bulk Emails_DataCard3</span>
<span class="t" style="left:676.40px;top:184.00px;font-size:10.00px;color:#333;font-weight:700;">Properties</span>
<span class="t" style="left:749.05px;top:185.00px;font-size:9.25px;color:#555;">Rules</span>
<span class="t" style="left:797.41px;top:184.00px;font-size:9.75px;color:#555;">Advanced</span>
<div class="a" style="left:677px;top:198px;width:48px;height:3px;background:#742774"></div>
<div class="a" style="left:664px;top:201px;width:286px;height:1px;background:#d8d8d8"></div>
<span class="t" style="left:674.37px;top:223.00px;font-size:10.50px;color:#555;">Field</span>
<span class="t" style="left:915.28px;top:222.00px;font-size:12.00px;color:#742774;">Edit</span>
<div class="a" style="left:664px;top:251px;width:286px;height:1px;background:#d8d8d8"></div>
<span class="t" style="left:674.36px;top:269.00px;font-size:10.75px;color:#555;">Position</span>
<div class="a" style="left:810px;top:262.5px;width:64px;height:21px;background:#fff;border:1px solid #d0d0d0"></div>
<div class="a" style="left:877.8px;top:262.5px;width:64.7px;height:21px;background:#fff;border:1px solid #d0d0d0"></div>
<span class="t" style="left:813.11px;top:269.00px;font-size:11.50px;color:#333;">0</span>
<span class="t" style="left:881.74px;top:269.00px;font-size:11.00px;color:#333;">1144</span>
<span class="t" style="left:839.19px;top:288.00px;font-size:8.50px;color:#555;">X</span>
<span class="t" style="left:906.49px;top:288.00px;font-size:8.50px;color:#555;">Y</span>
<span class="t" style="left:674.41px;top:311.00px;font-size:9.75px;color:#555;">Size</span>
<div class="a" style="left:810px;top:303.7px;width:64px;height:21.3px;background:#fff;border:1px solid #d0d0d0"></div>
<div class="a" style="left:877.8px;top:303.7px;width:64.7px;height:21.3px;background:#fff;border:1px solid #d0d0d0"></div>
<span class="t" style="left:813.12px;top:310.00px;font-size:11.25px;color:#333;">640</span>
<span class="t" style="left:881.77px;top:310.00px;font-size:10.50px;color:#333;">122</span>
<span class="t" style="left:830.13px;top:328.00px;font-size:9.50px;color:#555;">Width</span>
<span class="t" style="left:896.25px;top:329.00px;font-size:9.25px;color:#555;">Height</span>
<div class="a" style="left:664px;top:349.5px;width:286px;height:1px;background:#d8d8d8"></div>
<span class="t" style="left:674.34px;top:366.00px;font-size:11.00px;color:#555;">Color</span>
<div class="a" style="left:900.4px;top:361px;width:41.4px;height:20.5px;background:#fff;border:1px solid #d0d0d0"></div>
<svg style="left:915px;top:364px;" width="12" height="12" viewBox="0 0 12 12"><path d="M2.6 5.4 L6 2 L9.4 5.4 L6 8.8 Z" fill="#fff" stroke="#333" stroke-width="1.1" stroke-linejoin="round"/><path d="M4.4 3.6 Q3.4 0.6 5.2 0.8" fill="none" stroke="#333" stroke-width="0.9"/><path d="M9.8 6.6 Q10.8 8.2 9.8 8.8 Q8.8 8.2 9.8 6.6Z" fill="#333"/></svg>
<div class="a" style="left:905px;top:378.5px;width:32px;height:1px;background:#e8e8e8"></div>
<span class="t" style="left:674.34px;top:396.00px;font-size:11.00px;color:#555;">Border</span>
<div class="a" style="left:810px;top:389.7px;width:41.4px;height:21.3px;background:#fff;border:1px solid #d0d0d0"></div>
<div class="a" style="left:813.8px;top:400px;width:16px;height:1px;background:#444"></div>
<svg style="left:836.7px;top:397.5px;" width="10.5" height="5.5" viewBox="0 0 10.5 5.5"><path d="M0.5 0.5 L5.25 5.5 L10.0 0.5" fill="none" stroke="#333" stroke-width="1.2"/></svg>
<div class="a" style="left:855.3px;top:389.7px;width:41.2px;height:21.3px;background:#fff;border:1px solid #d0d0d0"></div>
<span class="t" style="left:858.31px;top:396.00px;font-size:11.50px;color:#333;">0</span>
<div class="a" style="left:900.4px;top:389.7px;width:41.4px;height:21.3px;background:#fff;border:1px solid #d0d0d0"></div>
<div class="a" style="left:904.5px;top:393.5px;width:33px;height:13.5px;background:#fff;border:1px solid #e4e4e4;box-shadow:0 0 1px #ccc"></div>
<div class="a" style="left:664px;top:421.5px;width:286px;height:1px;background:#d8d8d8"></div>
<span class="t" style="left:674.36px;top:440.00px;font-size:10.75px;color:#555;">Display mode</span>
<div class="a" style="left:810px;top:434px;width:131.8px;height:21.2px;background:#f3f3f3;border:1px solid #d6d6d6"></div>
<span class="t" style="left:812.83px;top:440.00px;font-size:11.25px;color:#a6a6a6;">Edit</span>
<svg style="left:926px;top:441.5px;" width="11" height="5.5" viewBox="0 0 11 5.5"><path d="M0.5 0.5 L5.5 5.5 L10.5 0.5" fill="none" stroke="#888" stroke-width="1"/></svg>
<span class="t" style="left:674.36px;top:469.00px;font-size:10.75px;color:#555;">Visible</span>
<span class="t" style="left:884.11px;top:469.00px;font-size:11.50px;color:#555;">On</span>
<div class="a" style="left:905.8px;top:465.7px;width:36.7px;height:17.1px;background:#742774;border-radius:9px"></div>
<svg style="left:925px;top:467.5px;" width="14" height="14" viewBox="0 0 14 14"><circle cx="7" cy="7" r="6" fill="#fff"/></svg>
<span class="t" style="left:674.29px;top:497.00px;font-size:11.75px;color:#555;">Width fit</span>
<span class="t" style="left:883.15px;top:497.00px;font-size:12.50px;color:#555;">Off</span>
<div class="a" style="left:905.8px;top:494.8px;width:36.7px;height:16.9px;background:#fff;border:1px solid #444;border-radius:9px"></div>
<svg style="left:909px;top:497.5px;" width="12" height="12" viewBox="0 0 12 12"><circle cx="6" cy="6" r="5" fill="#111"/></svg>
</body></html>
